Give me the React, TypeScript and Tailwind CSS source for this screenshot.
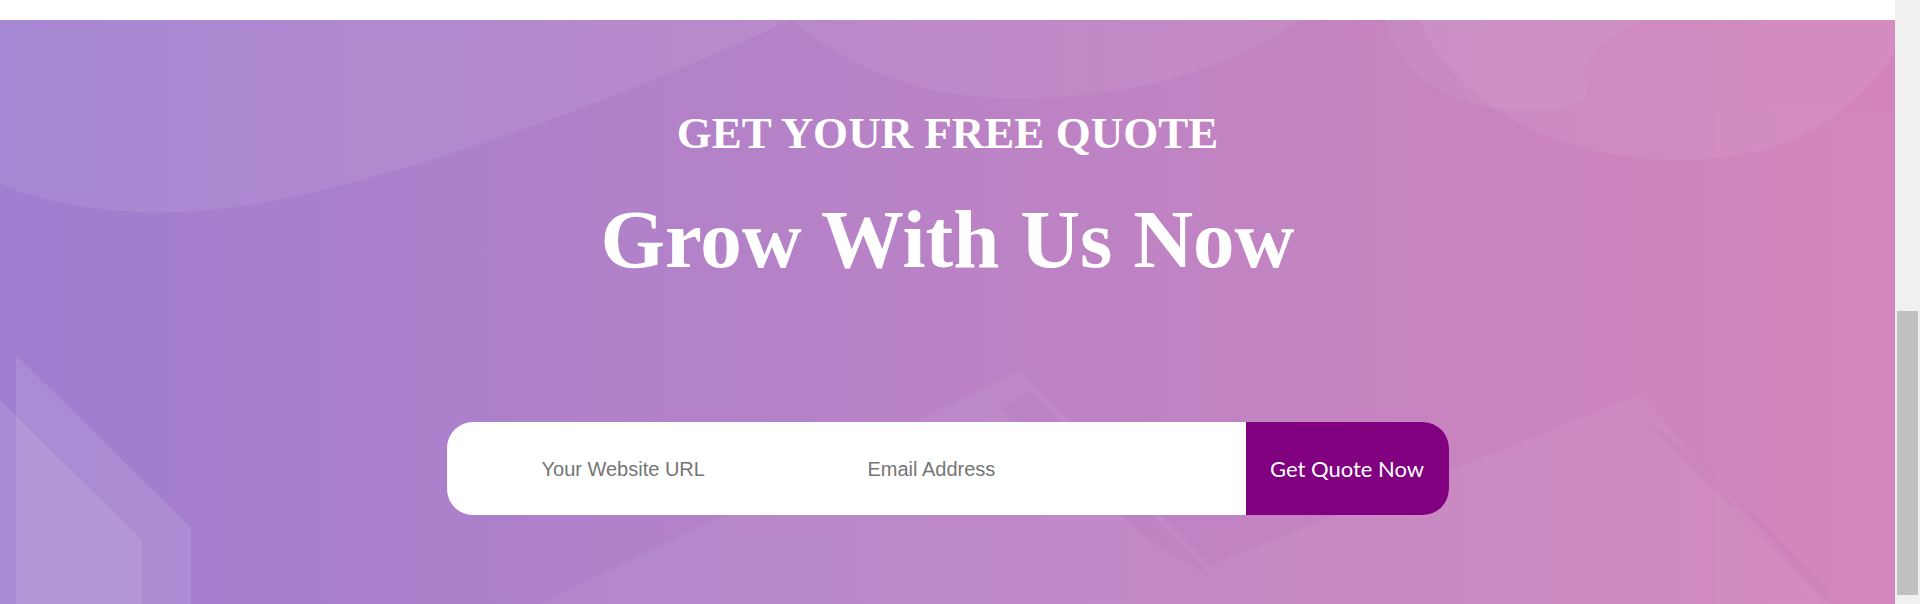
import React from "react";

function Decorations() {
  return (
    <svg
      className="absolute inset-0 h-full w-full"
      viewBox="0 0 1895 584"
      preserveAspectRatio="none"
      aria-hidden="true"
    >
      {/* top blobs */}
      <path d="M0,0 L0,164 C60,190 150,200 245,186 C400,160 620,80 790,0 Z" fill="#ffffff" fillOpacity="0.07" />
      <path d="M790,0 C840,40 910,78 1010,78 C1130,80 1230,50 1300,0 Z" fill="#ffffff" fillOpacity="0.06" />
      <path d="M1385,0 C1400,60 1460,95 1540,90 C1575,88 1592,80 1585,65 C1580,40 1600,20 1640,0 Z" fill="#ffffff" fillOpacity="0.05" />
      <path d="M1420,0 C1460,90 1560,140 1680,140 C1790,140 1860,90 1895,30 L1895,0 Z" fill="#ffffff" fillOpacity="0.06" />
      {/* right faint band */}
      <rect x="1714" y="90" width="181" height="494" fill="#ffffff" fillOpacity="0.025" />
      {/* left bottom shapes */}
      <polygon points="16,335 191,508 191,584 16,584" fill="#ffffff" fillOpacity="0.1" />
      <polygon points="0,380 142,520 142,584 0,584" fill="#ffffff" fillOpacity="0.1" />
      {/* mountains */}
      <polygon points="540,584 1020,350 1210,545 1640,375 1830,584" fill="#ffffff" fillOpacity="0.05" />
      <polygon points="1000,390 1030,370 1215,560 1150,520" fill="#7a2a80" fillOpacity="0.05" />
      <polygon points="1640,395 1700,440 1830,570 1825,584" fill="#7a2a80" fillOpacity="0.04" />
    </svg>
  );
}

export default function App() {
  return (
    <div className="flex h-[604px] w-[1920px] overflow-hidden">
      <div className="flex min-w-0 flex-1 flex-col">
        <div className="h-[20px] bg-white" />
        <section className="relative flex-1 overflow-hidden bg-linear-to-r from-[#a07ed0] to-[#d385ba]">
          <Decorations />
          <div className="relative flex flex-col items-center pt-[91px]">
            <h2
              className="text-[45px] leading-[45px] font-bold text-white"
              style={{ fontFamily: '"Liberation Serif", "Times New Roman", serif' }}
            >
              GET YOUR FREE QUOTE
            </h2>
            <h1
              className="mt-[42px] text-[83px] leading-[83px] font-bold text-white"
              style={{ fontFamily: '"Liberation Serif", "Times New Roman", serif' }}
            >
              Grow With Us Now
            </h1>
            <form
              className="mt-[141px] flex h-[93px] w-[1002px] overflow-hidden rounded-[26px] bg-white"
              onSubmit={(e) => e.preventDefault()}
            >
              <div className="flex flex-1 items-center pl-[95px]">
                <input
                  type="text"
                  placeholder="Your Website URL"
                  className="w-[326px] bg-transparent text-[20px] text-[#333] outline-none placeholder:text-[#757575]"
                  style={{ fontFamily: '"Liberation Sans", Arial, sans-serif' }}
                />
                <input
                  type="email"
                  placeholder="Email Address"
                  className="min-w-0 flex-1 bg-transparent text-[20px] text-[#333] outline-none placeholder:text-[#757575]"
                  style={{ fontFamily: '"Liberation Sans", Arial, sans-serif' }}
                />
              </div>
              <button
                type="submit"
                className="flex w-[203px] items-center justify-center bg-[#800080] text-[22px] text-white"
                style={{ fontFamily: 'Lato, "Open Sans", sans-serif' }}
              >
                Get Quote Now
              </button>
            </form>
          </div>
        </section>
      </div>
      <div className="w-[25px] bg-[#f0f0f0] pt-[311px] pl-[2px]">
        <div className="h-[284px] w-[21px] bg-[#c0c0c0]" />
      </div>
    </div>
  );
}
